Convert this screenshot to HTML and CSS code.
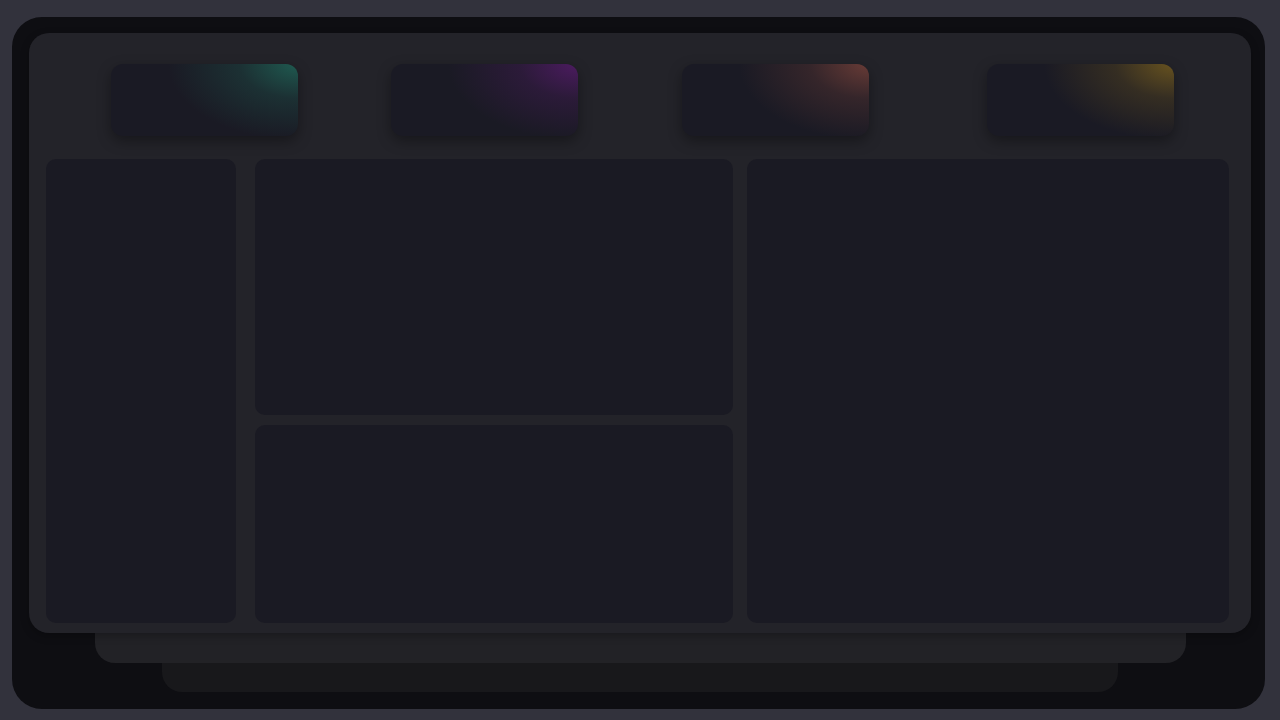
FILE: index.html
```html
<!DOCTYPE html>
<html lang="en">
    <head>
        <meta charset="UTF-8" />
        <meta name="viewport" content="width=device-width, initial-scale=1.0" />
        <title>Dashboard skeleton</title>
        <link rel="stylesheet" href="styles.css">
    </head>
    <body>
        <!-- 바깥 프레임 -->
        <div class="frame">
            <!-- 메인 패널 -->
            <div class="panel">
                <!-- 상단 스탯카드 -->
                <div class="stats">
                    <div class="stat teal"></div>
                    <div class="stat purple"></div>
                    <div class="stat salmon"></div>
                    <div class="stat gold"></div>
                </div>
                <!-- 하단 그리드 -->
                <div class="grid">
                    <div class="box side"></div>
                    <div class="mid">
                        <div class="box top"></div>
                        <div class="box bottom"></div>
                    </div>
                    <div class="box wide"></div>
                </div>
            </div>
            <!-- 뒤에 쌓인 레이어 -->
            <div class="layer l1"></div>
            <div class="layer l2"></div>
        </div>
    </body>
</html>
```

FILE: styles.css
```css
html,
body {
    margin: 0;
    height: 100%;
}
body {
    background: #32323c;
    padding: 17px 15px 11px 12px;
    box-sizing: border-box;
    font-family: "Inter", "Liberation Sans", sans-serif;
}
/* 바깥 프레임 */
.frame {
    background: #0e0e12;
    border-radius: 30px;
    padding: 16px 14px 17px 17px;
    height: 692px;
    box-sizing: border-box;
}
/* 메인 패널 */
.panel {
    position: relative;
    z-index: 2;
    background: #232329;
    border-radius: 20px;
    height: 600px;
    box-sizing: border-box;
    padding: 31px 22px 10px 17px;
    display: flex;
    flex-direction: column;
    gap: 23px;
    box-shadow: 0 3px 8px rgba(0, 0, 0, 0.25);
}
/* 스탯카드 줄 */
.stats {
    display: grid;
    grid-template-columns: 280px 291px 305px 187px;
    padding-left: 65px;
    height: 72px;
}
.stat {
    width: 187px;
    height: 72px;
    border-radius: 12px;
    background-color: #1a1a24;
    box-shadow: 0 5px 14px rgba(0, 0, 0, 0.35);
}
.teal {
    background-image: radial-gradient(ellipse 130px 76px at 100% 0%, #1f5a50, rgba(31, 90, 80, 0.35) 45%, rgba(26, 26, 36, 0) 100%);
}
.purple {
    background-image: radial-gradient(ellipse 130px 76px at 100% 0%, #4c1b60, rgba(76, 27, 96, 0.35) 45%, rgba(26, 26, 36, 0) 100%);
}
.salmon {
    background-image: radial-gradient(ellipse 130px 76px at 100% 0%, #683b36, rgba(104, 59, 54, 0.35) 45%, rgba(26, 26, 36, 0) 100%);
}
.gold {
    background-image: radial-gradient(ellipse 130px 76px at 100% 0%, #67521f, rgba(103, 82, 31, 0.35) 45%, rgba(26, 26, 36, 0) 100%);
}
/* 하단 그리드 */
.grid {
    flex: 1;
    display: grid;
    grid-template-columns: 190px 478px 1fr;
    column-gap: 19px;
}
.grid .wide {
    margin-left: -5px;
}
.mid {
    display: grid;
    grid-template-rows: 256px 1fr;
    row-gap: 10px;
}
.box {
    background: #1a1a23;
    border-radius: 10px;
}
/* 뒤 레이어 */
.layer {
    position: relative;
    border-radius: 0 0 20px 20px;
}
.l1 {
    z-index: 1;
    background: #222226;
    height: 30px;
    margin-left: 66px;
    width: 1091px;
}
.l2 {
    background: #18181b;
    height: 29px;
    margin-left: 133px;
    width: 956px;
}
```
